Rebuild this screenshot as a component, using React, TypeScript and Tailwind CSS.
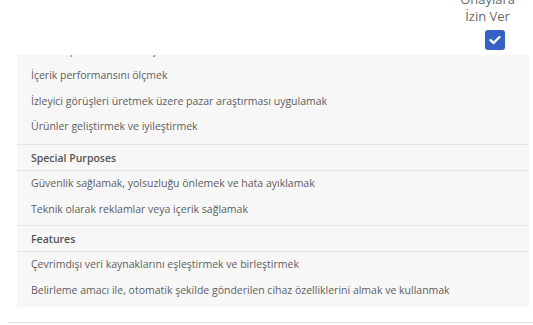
import React from "react";

const groups: { title?: string; items: string[] }[] = [
  {
    items: [
      "Reklam performansını ölçmek",
      "İçerik performansını ölçmek",
      "İzleyici görüşleri üretmek üzere pazar araştırması uygulamak",
      "Ürünler geliştirmek ve iyileştirmek",
    ],
  },
  {
    title: "Special Purposes",
    items: [
      "Güvenlik sağlamak, yolsuzluğu önlemek ve hata ayıklamak",
      "Teknik olarak reklamlar veya içerik sağlamak",
    ],
  },
  {
    title: "Features",
    items: [
      "Çevrimdışı veri kaynaklarını eşleştirmek ve birleştirmek",
      "Belirleme amacı ile, otomatik şekilde gönderilen cihaz özelliklerini almak ve kullanmak",
    ],
  },
];

export default function App() {
  return (
    <div
      className="w-[533px] h-[325px] bg-white overflow-hidden"
      style={{ fontFamily: '"Open Sans", "Noto Sans", sans-serif' }}
    >
      <div className="h-[55px] flex justify-end pr-[18px]">
        <div className="flex flex-col items-center -mt-[9px]">
          <div className="text-[13px] leading-[17px] text-[#6a6a6a] text-center">
            Onaylara
            <br />
            İzin Ver
          </div>
          <div className="mt-[5px] ml-[15px] w-[20px] h-[20px] rounded-[3px] bg-[#3560c5] flex items-center justify-center">
            <svg width="12" height="10" viewBox="0 0 12 10">
              <path d="M1.5 5.2 L4.6 8 L10.5 2" fill="none" stroke="white" strokeWidth="2.4" strokeLinecap="round" strokeLinejoin="round" />
            </svg>
          </div>
        </div>
      </div>
      <div className="ml-[17px] mr-[4px] h-[252px] bg-[#f7f7f7] overflow-hidden">
        <div className="-mt-[17.5px]">
          {groups.map((g, gi) => (
            <div key={gi} className={gi > 0 ? "border-t border-[#e4e4e4]" : ""}>
              {g.title && (
                <div className="h-[26px] leading-[26px] pl-[14px] text-[10.5px] font-semibold text-[#555] border-b border-[#e4e4e4]">
                  {g.title}
                </div>
              )}
              <div className={gi === 0 ? "pb-[4.5px]" : "pb-[3px]"}>
                {g.items.map((it, ii) => (
                  <div key={ii} className="h-[25.5px] leading-[25.5px] pl-[14px] text-[10.5px] text-[#5e5e5e] whitespace-nowrap">
                    {it}
                  </div>
                ))}
              </div>
            </div>
          ))}
        </div>
      </div>
      <div className="mt-[15px] ml-[7px] h-px bg-[#dedede]" />
    </div>
  );
}
